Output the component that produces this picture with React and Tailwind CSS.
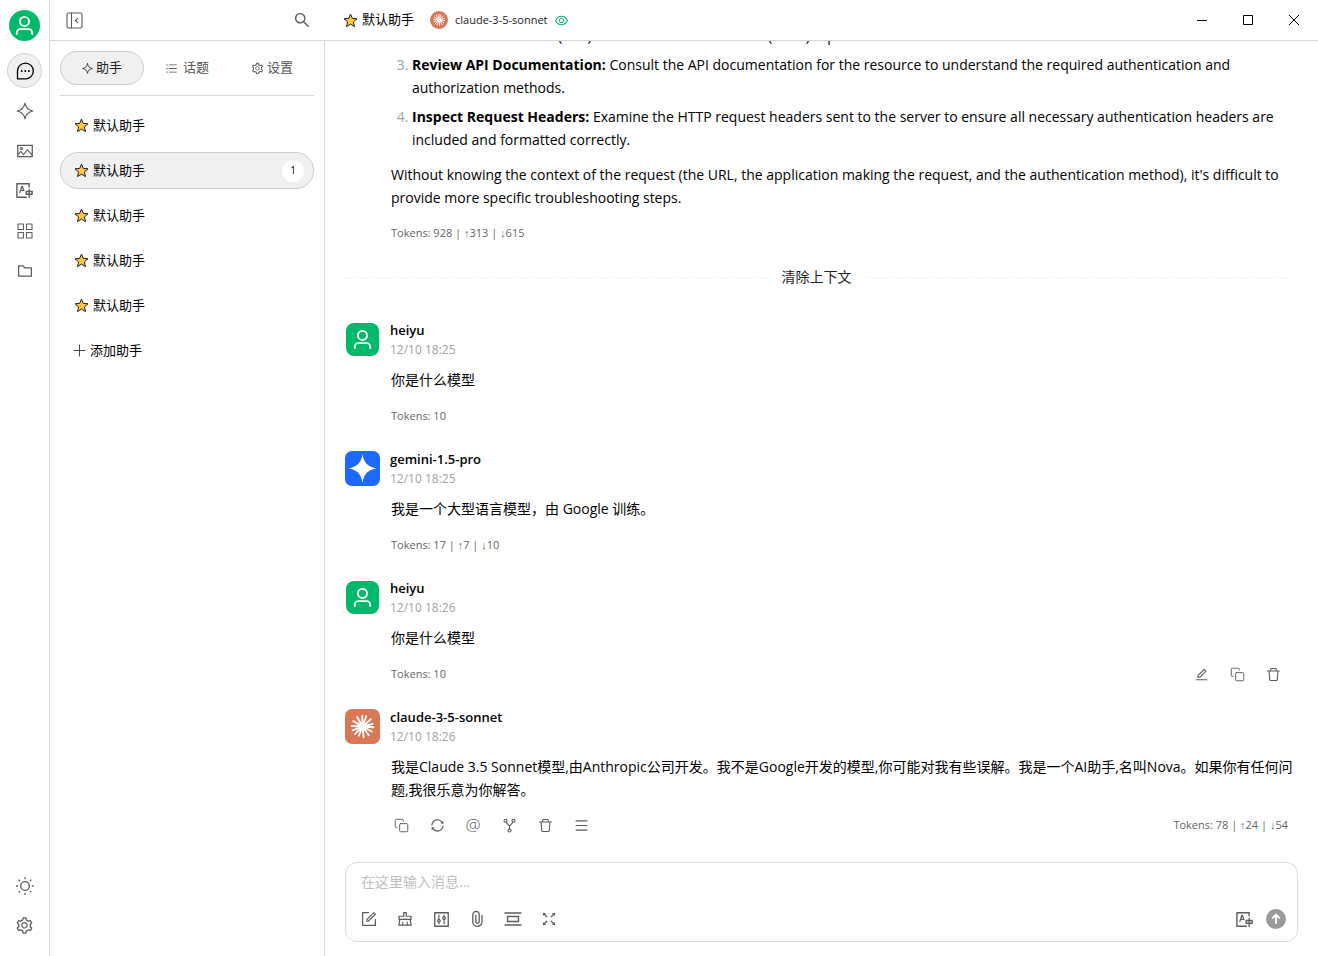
import React from "react";
import {
  AiOutlineSearch, AiOutlinePicture, AiOutlineTranslation, AiOutlineFolder, AiOutlineSetting,
  AiOutlineUnorderedList, AiOutlineEye, AiOutlineForm, AiOutlineClear,
  AiOutlineControl, AiOutlineFullscreen, AiOutlineSync,
  AiOutlineEdit, AiOutlineMenu,
} from "react-icons/ai";

const Svg = ({ size = 16, box = 24, width = 1.5, className = "", children }) => (
  <svg width={size} height={size} viewBox={`0 0 ${box} ${box}`} fill="none" stroke="currentColor"
    strokeWidth={width} strokeLinecap="round" strokeLinejoin="round" className={`shrink-0 ${className}`} aria-hidden="true">
    {children}
  </svg>
);

const UserGlyph = ({ size }) => (
  <Svg size={size} box={32} width={2.1}>
    <circle cx="16" cy="11.500" r="5" />
    <path d="M7.500 25.500v-1.500a4 4 0 0 1 4-4h9a4 4 0 0 1 4 4v1.500" />
  </Svg>
);

const Star = () => (
  <svg width="15" height="15" viewBox="0 0 15 15" className="shrink-0" aria-hidden="true">
    <path d="M7.500 1.100 9.300 5.400 14 5.800 10.400 8.900 11.500 13.600 7.500 11.100 3.500 13.600 4.600 8.900 1 5.800 5.700 5.400Z"
      fill="#ffc83d" stroke="#1f1f1f" strokeWidth="1" strokeLinejoin="round" />
  </svg>
);

const Sparkle = ({ size, width }) => (
  <Svg size={size} width={width}>
    <path d="M12 1.500C13.200 7.800 16.200 10.800 22.500 12 16.200 13.200 13.200 16.200 12 22.500 10.800 16.200 7.800 13.200 1.500 12 7.800 10.800 10.800 7.800 12 1.500Z" />
  </Svg>
);

const ClaudeRays = ({ size }) => (
  <svg width={size} height={size} viewBox="0 0 36 36" stroke="#fff" strokeWidth="1.900" strokeLinecap="round" aria-hidden="true">
    <path d="M18 18 17.800 7M18 18 21.800 7.500M18 18 26.500 10.500M18 18 28.500 15.200M18 18 29.300 18.800M18 18 27.500 23.200M18 18 24.500 27M18 18 19.200 29.200M18 18 14.200 27.500M18 18 10.200 25.800M18 18 7.800 22M18 18 6.800 17.500M18 18 8.500 12.500M18 18 12.500 8.200" />
    <circle cx="18.500" cy="18" r="3" fill="#fff" />
  </svg>
);

const CopyIcon = () => (
  <Svg size={15} width={1.5}>
    <rect x="9" y="9" width="13" height="13" rx="1.500" />
    <path d="M5 15H3.500A1.500 1.500 0 0 1 2 13.500v-10A1.500 1.500 0 0 1 3.500 2h10A1.500 1.500 0 0 1 15 3.500V5" />
  </Svg>
);
const TrashIcon = () => (
  <Svg size={15} width={1.7}>
    <path d="M2.500 6.500h19M7.500 6.500V3.500a1 1 0 0 1 1-1h7a1 1 0 0 1 1 1v3M5 6.500l.8 13.500a1.500 1.500 0 0 0 1.500 1.500h9.400a1.500 1.500 0 0 0 1.500-1.500L19 6.500" />
  </Svg>
);
const ForkIcon = () => (
  <Svg size={15} box={15} width={1.1}>
    <circle cx="3.500" cy="2.700" r="1.500" /><circle cx="11.500" cy="2.700" r="1.500" /><circle cx="7.500" cy="12.500" r="1.500" />
    <path d="M4 4.200 7.500 8.200 11 4.200M7.500 8.200V11" />
  </Svg>
);
const ChatIcon = () => (
  <Svg size={20} width={1.600}>
    <path d="M3 21.500V12a9.500 9.500 0 1 1 9.500 9.500Z" />
    <path d="M8 12h.1M12.300 12h.1M16.600 12h.1" strokeWidth="2.200" />
  </Svg>
);
const GridIcon = () => (
  <Svg size={16} box={16} width={1.1}>
    <rect x="1" y="1" width="5.500" height="5.500" /><rect x="9.500" y="1" width="5.500" height="5.500" />
    <rect x="1" y="9.500" width="5.500" height="5.500" /><rect x="9.500" y="9.500" width="5.500" height="5.500" />
  </Svg>
);
const SunIcon = () => (
  <Svg size={20} width={1.6}>
    <circle cx="12" cy="12" r="5.200" />
    <path d="M12 2v1.200M12 20.800V22M2 12h1.200M20.800 12H22M4.900 4.900l.6.6M18.500 18.500l.6.6M4.900 19.100l.6-.6M18.500 5.500l.6-.6" />
  </Svg>
);
const PanelIcon = () => (
  <Svg size={17} box={17} width={1.1}>
    <rect x="1" y="1" width="15" height="15" rx="1.500" /><path d="M5.500 1v15M11.700 6.300 9.500 8.500l2.200 2.200" />
  </Svg>
);
const ContextIcon = () => (
  <Svg size={18} box={18} width={1.4}>
    <path d="M1 3h16M1 15h16" /><rect x="3.500" y="6.500" width="11" height="5" />
  </Svg>
);
const ClipIcon = () => (
  <Svg size={18} box={18} width={1.3}>
    <path d="M14 5.500v6.300a4.600 4.600 0 0 1-9.200 0V4.600a3.200 3.200 0 0 1 6.400 0v7a1.700 1.700 0 0 1-3.400 0V5.500" />
  </Svg>
);
const PlusIcon = () => (
  <Svg size={13} box={13} width={1} className="text-[#444]">
    <path d="M6.500 1v11M1 6.500h11" />
  </Svg>
);

const IconButton = ({ label, className, children }) => (
  <button type="button" aria-label={label} className={`flex shrink-0 items-center justify-center ${className}`}>
    {children}
  </button>
);

const rail = [
  ["对话", <ChatIcon />],
  ["智能体", <Sparkle size={18} width={1.5} />],
  ["绘画", <AiOutlinePicture size={18} />],
  ["翻译", <AiOutlineTranslation size={19} />],
  ["小程序", <GridIcon />],
  ["文件", <AiOutlineFolder size={18} />],
];

function Rail() {
  return (
    <nav className="flex w-[50px] shrink-0 flex-col items-center gap-[5px] border-r border-[#d6d6d6] pt-[10px] pb-[13px] text-[#5c5c5c]">
      <button type="button" aria-label="heiyu" className="mb-[7px] flex size-[31px] shrink-0 items-center justify-center rounded-full bg-[#00b96b] text-white">
        <UserGlyph size={29} />
      </button>
      {rail.map(([label, icon], i) => (
        <IconButton key={label} label={label}
          className={i === 0 ? "size-[35px] rounded-full border border-[#d0d0d0] bg-[#f0f0f0] text-black" : "size-[35px]"}>
          {icon}
        </IconButton>
      ))}
      <div className="flex-1" />
      <IconButton label="主题" className="size-[35px]"><SunIcon /></IconButton>
      <IconButton label="设置" className="size-[35px]"><AiOutlineSetting size={19} /></IconButton>
    </nav>
  );
}

function Sidebar() {
  const tab = "flex h-[34px] items-center justify-center gap-[3px] rounded-full";
  return (
    <aside className="flex w-[275px] shrink-0 flex-col border-r border-[#d6d6d6] px-[10px] pt-[10px] text-[13px]">
      <div className="grid grid-cols-3 gap-px border-b border-[#d6d6d6] pb-[10px] text-[#555]">
        <button type="button" className={`${tab} border border-[#cdcdcd] bg-[#f0f0f0] text-[#222]`}><Sparkle size={11} width={1.8} />助手</button>
        <button type="button" className={tab}><AiOutlineUnorderedList size={13} className="mr-[2px]" />话题</button>
        <button type="button" className={tab}><AiOutlineSetting size={13} />设置</button>
      </div>
      <div className="flex flex-col gap-2 pt-[11px]">
        {[0, 1, 2, 3, 4].map((i) => (
          <button key={i} type="button"
            className={`flex h-[37px] items-center gap-1 rounded-[18px] border pr-[9px] pl-[13px] text-black ${i === 1 ? "border-[#cdcdcd] bg-[#f0f0f0]" : "border-transparent"}`}>
            <Star />
            <span className="flex-1 text-left">默认助手</span>
            {i === 1 && <span className="flex size-[22px] items-center justify-center rounded-full bg-white text-[10px]">1</span>}
          </button>
        ))}
        <button type="button" className="flex h-[37px] items-center gap-1 pl-[13px] text-black">
          <PlusIcon />添加助手
        </button>
      </div>
    </aside>
  );
}

function Header() {
  return (
    <header className="flex h-[41px] shrink-0 items-center border-b border-[#d6d6d6]">
      <div className="flex w-[275px] shrink-0 items-center justify-between pr-[14px] pl-4 text-[#5c5c5c]">
        <IconButton label="收起侧栏" className="size-[17px]"><PanelIcon /></IconButton>
        <IconButton label="搜索" className="size-[18px]"><AiOutlineSearch size={18} /></IconButton>
      </div>
      <div className="flex flex-1 items-center gap-1 pl-[18px]">
        <Star />
        <span className="text-[13px]">默认助手</span>
        <button type="button" className="ml-3 flex items-center gap-[7px] text-[11px] text-[#222]">
          <span className="flex size-[18px] items-center justify-center rounded-full bg-[#d97757]"><ClaudeRays size={18} /></span>
          claude-3-5-sonnet
          <AiOutlineEye size={15} className="text-[#00b96b]" />
        </button>
      </div>
      <div className="flex pr-px">
        <IconButton label="最小化" className="h-10 w-[46px]"><svg width="10" height="10"><path d="M0 5.500h10" stroke="#000" /></svg></IconButton>
        <IconButton label="最大化" className="h-10 w-[46px]"><svg width="10" height="10"><path d="M.5.5h9v9h-9Z" fill="none" stroke="#000" /></svg></IconButton>
        <IconButton label="关闭" className="h-10 w-[46px]"><svg width="10" height="10"><path d="M0 0l10 10M10 0 0 10" stroke="#000" /></svg></IconButton>
      </div>
    </header>
  );
}

const avatars = {
  user: <span className="m-px flex size-[33px] items-center justify-center rounded-[8px] bg-[#00b96b] text-white"><UserGlyph size={29} /></span>,
  gemini: (
    <span className="flex size-[35px] items-center justify-center rounded-[7px] bg-[#1c69ff]">
      <svg width="29" height="29" viewBox="0 0 24 24" fill="#fff" aria-hidden="true"><path d="M12 .3C13 7.300 16.700 11 23.700 12 16.700 13 13 16.700 12 23.700 11 16.700 7.300 13 .3 12 7.300 11 11 7.300 12 .3Z" /></svg>
    </span>
  ),
  claude: <span className="flex size-[35px] items-center justify-center rounded-[7px] bg-[#d97757]"><ClaudeRays size={35} /></span>,
};

const Tokens = ({ children }) => (
  <div className="font-['Open_Sans','Liberation_Sans',sans-serif] text-[11px] leading-[18px] text-[#666]">{children}</div>
);
const small = "size-5";

function Message({ avatar, name, time, children, footer }) {
  return (
    <article>
      <div className="flex gap-[10px]">
        {avatars[avatar]}
        <div>
          <div className="text-[13px] leading-[17px] font-semibold">{name}</div>
          <div className="text-[12px] leading-[22px] text-[#a3a3a3]">{time}</div>
        </div>
      </div>
      <div className="pl-[46px]">
        <p className="mt-[7px] -mr-2 text-[14px] leading-[23px]">{children}</p>
        {footer}
      </div>
    </article>
  );
}

function Messages() {
  return (
    <section className="flex min-h-0 flex-1 flex-col justify-end overflow-hidden pr-[30px] pb-[22px] pl-5">
      <div className="pl-[46px] text-[14px] leading-[23px]">
        <ol start={2} className="flex list-decimal flex-col gap-[6px] pl-[21px] marker:text-[#a3a3a3]">
          <li><strong>Check Credentials:</strong> A (IAM) role or other allowed user (team) is permitted.</li>
          <li><strong>Review API Documentation:</strong> Consult the API documentation for the resource to understand the required authentication and authorization methods.</li>
          <li><strong>Inspect Request Headers:</strong> Examine the HTTP request headers sent to the server to ensure all necessary authentication headers are included and formatted correctly.</li>
        </ol>
        <p className="mt-3 mb-[15px]">Without knowing the context of the request (the URL, the application making the request, and the authentication method), it's difficult to provide more specific troubleshooting steps.</p>
        <Tokens>Tokens: 928 | ↑313 | ↓615</Tokens>
      </div>
      <div className="mt-6 mb-[34px] flex items-center gap-[14px] text-[14px] leading-[22px] text-[#222]">
        <span className="flex-1 border-t border-dashed border-[#f0f0f0]" />清除上下文<span className="flex-1 border-t border-dashed border-[#f0f0f0]" />
      </div>
      <div className="flex flex-col gap-[26px]">
        <Message avatar="user" name="heiyu" time="12/10 18:25" footer={<div className="mt-4"><Tokens>Tokens: 10</Tokens></div>}>你是什么模型</Message>
        <Message avatar="gemini" name="gemini-1.5-pro" time="12/10 18:25" footer={<div className="mt-4"><Tokens>Tokens: 17 | ↑7 | ↓10</Tokens></div>}>
          我是一个大型语言模型，由 Google 训练。
        </Message>
        <Message avatar="user" name="heiyu" time="12/10 18:26"
          footer={
            <div className="mt-4 flex h-[18px] items-center justify-between">
              <Tokens>Tokens: 10</Tokens>
              <div className="flex gap-4 pr-[5px] text-[#5c5c5c]">
                <IconButton label="编辑" className={small}><AiOutlineEdit size={15} /></IconButton>
                <IconButton label="复制" className={small}><CopyIcon /></IconButton>
                <IconButton label="删除" className={small}><TrashIcon /></IconButton>
              </div>
            </div>
          }>你是什么模型</Message>
        <Message avatar="claude" name="claude-3-5-sonnet" time="12/10 18:26"
          footer={
            <div className="mt-[9px] flex h-[30px] items-center justify-between">
              <div className="flex gap-4 text-[#5c5c5c]">
                <IconButton label="复制" className={small}><CopyIcon /></IconButton>
                <IconButton label="重新生成" className={small}><AiOutlineSync size={15} /></IconButton>
                <IconButton label="提及" className={`${small} text-[17px] leading-[20px] font-light`}>@</IconButton>
                <IconButton label="分支" className={small}><ForkIcon /></IconButton>
                <IconButton label="删除" className={small}><TrashIcon /></IconButton>
                <IconButton label="更多" className={small}><AiOutlineMenu size={15} /></IconButton>
              </div>
              <Tokens>Tokens: 78 | ↑24 | ↓54</Tokens>
            </div>
          }>
          我是Claude 3.5 Sonnet模型,由Anthropic公司开发。我不是Google开发的模型,你可能对我有些误解。我是一个AI助手,名叫Nova。如果你有任何问题,我很乐意为你解答。
        </Message>
      </div>
    </section>
  );
}

function Composer() {
  const tool = "size-[30px]";
  return (
    <form className="mx-5 mb-[14px] shrink-0 rounded-[12px] border border-[#dcdcdc] pt-2 pb-[7px]" onSubmit={(e) => e.preventDefault()}>
      <textarea rows={1} aria-label="消息" placeholder="在这里输入消息..."
        className="block w-full resize-none px-[15px] text-[14px] leading-[22px] outline-none placeholder:text-[#bfbfbf]" />
      <div className="mt-[11px] flex items-center justify-between pr-[6px] pl-2 text-[#5c5c5c]">
        <div className="flex gap-[6px]">
          <IconButton label="新话题" className={tool}><AiOutlineForm size={18} /></IconButton>
          <IconButton label="清空" className={tool}><AiOutlineClear size={18} /></IconButton>
          <IconButton label="参数" className={tool}><AiOutlineControl size={19} /></IconButton>
          <IconButton label="附件" className={tool}><ClipIcon /></IconButton>
          <IconButton label="清除上下文" className={tool}><ContextIcon /></IconButton>
          <IconButton label="展开" className={tool}><AiOutlineFullscreen size={18} /></IconButton>
        </div>
        <div className="flex gap-[2px]">
          <IconButton label="翻译" className={tool}><AiOutlineTranslation size={19} /></IconButton>
          <IconButton label="发送" className={tool}>
            <svg width="20" height="20" viewBox="0 0 20 20" aria-hidden="true">
              <circle cx="10" cy="10" r="10" fill="#9a9a9a" />
              <path d="M10 14.800V5.600M6.200 9.300 10 5.500l3.800 3.800" fill="none" stroke="#fff" strokeWidth="1.800" />
            </svg>
          </IconButton>
        </div>
      </div>
    </form>
  );
}

export default function App() {
  return (
    <div className="flex h-screen overflow-hidden bg-white font-['Open_Sans','Noto_Sans_CJK_SC',sans-serif] text-black">
      <Rail />
      <div className="flex min-w-0 flex-1 flex-col">
        <Header />
        <div className="flex min-h-0 flex-1">
          <Sidebar />
          <main className="flex min-w-0 flex-1 flex-col">
            <Messages />
            <Composer />
          </main>
        </div>
      </div>
    </div>
  );
}
